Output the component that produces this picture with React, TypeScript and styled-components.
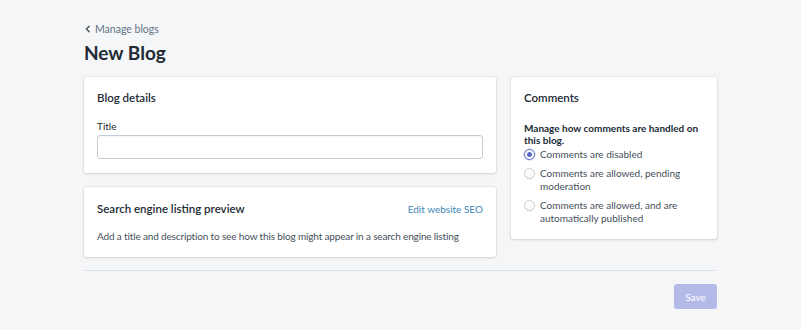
import React from 'react';
import styled, { createGlobalStyle } from 'styled-components';

const GlobalStyle = createGlobalStyle`
  html, body {
    margin: 0;
    padding: 0;
    background: #f4f6f8;
  }
  body {
    font-family: "Lato", "Open Sans", sans-serif;
    font-size: 10px;
    color: #212b36;
    -webkit-font-smoothing: antialiased;
  }
`;

const Page = styled.div`
  width: 633px;
  margin: 0 auto;
  padding-top: 21px;
`;

const Breadcrumb = styled.a`
  display: flex;
  width: fit-content;
  align-items: center;
  gap: 3px;
  font-size: 10.5px;
  line-height: 16px;
  color: #637381;
  text-decoration: none;

  svg {
    width: 8px;
    height: 8px;
  }
`;

const Title = styled.h1`
  margin: 3px 0 0 0;
  font-size: 19px;
  line-height: 26px;
  font-weight: 700;
  color: #212b36;
`;

const Layout = styled.div`
  display: grid;
  grid-template-columns: 412px 206px;
  gap: 15px;
  align-items: start;
  margin-top: 11px;
`;

const Column = styled.div`
  display: flex;
  flex-direction: column;
  gap: 14px;
`;

const Card = styled.section`
  background: #fff;
  border-radius: 3px;
  box-shadow: 0 0 0 1px rgba(63, 63, 68, 0.05), 0 1px 3px 0 rgba(63, 63, 68, 0.15);
  padding: 13px 13px 14px;
`;

const CardHeader = styled.div`
  display: flex;
  justify-content: space-between;
  align-items: center;
  margin-top: 1px;
`;

const CardTitle = styled.h2`
  margin: 0;
  font-size: 11.5px;
  line-height: 16px;
  font-weight: 600;
  color: #212b36;
`;

const Link = styled.a`
  font-size: 10px;
  color: #3f87b6;
  text-decoration: none;
`;

const Label = styled.label`
  display: block;
  margin-top: 13px;
  font-size: 10px;
  line-height: 14px;
  color: #212b36;
`;

const Input = styled.input`
  display: block;
  box-sizing: border-box;
  width: 100%;
  height: 24px;
  margin-top: 2px;
  border: 1px solid #c4cdd5;
  border-radius: 3px;
  background: #fff;
  box-shadow: inset 0 1px 0 0 rgba(99, 115, 129, 0.05);
  outline: none;
`;

const Text = styled.p`
  margin: 12px 0 0 0;
  font-size: 10px;
  line-height: 14px;
  letter-spacing: -0.15px;
  color: #454f5b;
`;

const Strong = styled.p`
  margin: 16px 0 0 0;
  font-size: 10px;
  line-height: 12px;
  font-weight: 700;
  color: #212b36;
`;

const RadioList = styled.div`
  display: flex;
  flex-direction: column;
  gap: 6px;
  margin-top: 2px;
`;

const RadioRow = styled.label`
  display: flex;
  align-items: flex-start;
  gap: 5px;
  font-size: 10px;
  line-height: 13px;
  color: #454f5b;
`;

const RadioCircle = styled.span<{ $checked?: boolean }>`
  flex: none;
  box-sizing: border-box;
  width: 11px;
  height: 11px;
  margin-top: 1px;
  border-radius: 50%;
  border: 1px solid ${(p) => (p.$checked ? '#5c6ac4' : '#c4cdd5')};
  background: ${(p) => (p.$checked ? '#fff' : 'linear-gradient(180deg, #fff, #f9fafb)')};
  box-shadow: ${(p) => (p.$checked ? '0 0 0 1px #e3e6f7' : '0 1px 0 0 rgba(22, 29, 37, 0.05)')};
  display: flex;
  align-items: center;
  justify-content: center;

  &::after {
    content: '';
    width: 5px;
    height: 5px;
    border-radius: 50%;
    background: #5c6ac4;
    display: ${(p) => (p.$checked ? 'block' : 'none')};
  }
`;

const Divider = styled.hr`
  margin: 13px 0 0 0;
  border: none;
  border-top: 1px solid #dfe3e8;
`;

const Footer = styled.div`
  display: flex;
  justify-content: flex-end;
  padding-top: 13px;
  padding-bottom: 20px;
`;

const SaveButton = styled.button`
  width: 43px;
  height: 25px;
  border: none;
  border-radius: 3px;
  background: #b3bae8;
  color: #fff;
  font-family: inherit;
  font-size: 10px;
  padding: 0;
`;

const options = [
  { label: 'Comments are disabled', checked: true },
  { label: 'Comments are allowed, pending moderation' },
  { label: 'Comments are allowed, and are automatically published' },
];

export default function App() {
  return (
    <>
      <GlobalStyle />
      <Page>
        <Breadcrumb href="#">
          <svg viewBox="0 0 10 10" fill="none" stroke="#454f5b" strokeWidth="1.6" strokeLinecap="round" strokeLinejoin="round">
            <path d="M6.5 1.5 3 5l3.5 3.5" />
          </svg>
          Manage blogs
        </Breadcrumb>
        <Title>New Blog</Title>
        <Layout>
          <Column>
            <Card>
              <CardTitle>Blog details</CardTitle>
              <Label>Title</Label>
              <Input />
            </Card>
            <Card>
              <CardHeader>
                <CardTitle>Search engine listing preview</CardTitle>
                <Link href="#">Edit website SEO</Link>
              </CardHeader>
              <Text>Add a title and description to see how this blog might appear in a search engine listing</Text>
            </Card>
          </Column>
          <Card>
            <CardTitle>Comments</CardTitle>
            <Strong>Manage how comments are handled on this blog.</Strong>
            <RadioList>
              {options.map((o) => (
                <RadioRow key={o.label}>
                  <RadioCircle $checked={o.checked} />
                  <span>{o.label}</span>
                </RadioRow>
              ))}
            </RadioList>
          </Card>
        </Layout>
        <Divider />
        <Footer>
          <SaveButton disabled>Save</SaveButton>
        </Footer>
      </Page>
    </>
  );
}
